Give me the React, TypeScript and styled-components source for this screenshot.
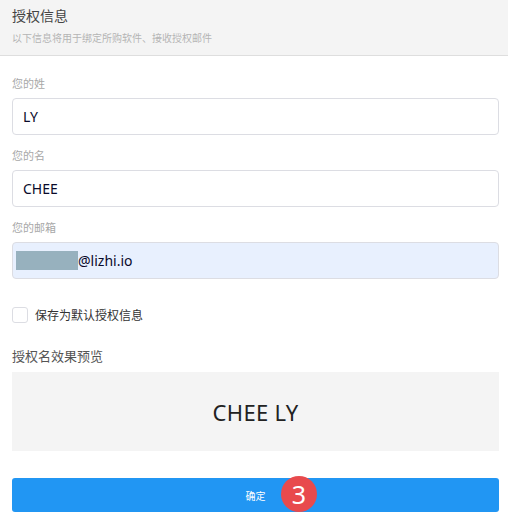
import React from "react";
import styled, { createGlobalStyle } from "styled-components";

const Global = createGlobalStyle`
  html, body { margin: 0; padding: 0; background: #fff; }
  body { font-family: "Segoe UI", "Noto Sans", "Noto Sans CJK SC", sans-serif; }
  * { box-sizing: border-box; }
`;

const Page = styled.div`
  width: 508px;
  height: 523px;
  background: #fff;
  display: flex;
  flex-direction: column;
`;

const Header = styled.div`
  height: 56px;
  background: #f4f4f4;
  border-bottom: 1px solid #dedede;
  padding: 5px 12px 0;
  display: flex;
  flex-direction: column;
`;

const Title = styled.div`
  font-size: 14px;
  line-height: 22px;
  color: #444;
`;

const Subtitle = styled.div`
  font-size: 10px;
  line-height: 14px;
  margin-top: 4px;
  color: #b5b5b5;
`;

const Body = styled.div`
  padding: 20px 9px 0 12px;
  display: flex;
  flex-direction: column;
`;

const Label = styled.div`
  font-size: 11px;
  line-height: 16px;
  color: #a8a8a8;
  margin-bottom: 6px;
`;

const Field = styled.div<{ $filled?: boolean }>`
  height: 37px;
  border: 1px solid #dcdde3;
  border-radius: 4px;
  background: ${(p) => (p.$filled ? "#e8f0fe" : "#fff")};
  display: flex;
  align-items: center;
  padding-left: ${(p) => (p.$filled ? "3px" : "10px")};
  font-size: 14px;
  color: #0a0a2a;
  margin-bottom: 13px;
`;

const Mask = styled.span`
  display: inline-block;
  width: 62px;
  height: 19px;
  background: #97b1be;
`;

const CheckRow = styled.label`
  display: flex;
  align-items: center;
  gap: 7px;
  margin-top: 14px;
  font-size: 12px;
  color: #333;
`;

const Box = styled.span`
  width: 16px;
  height: 16px;
  border: 1px solid #dcdde3;
  border-radius: 3px;
  background: #fff;
`;

const PreviewTitle = styled.div`
  font-size: 13px;
  line-height: 18px;
  color: #555;
  margin-top: 23px;
  margin-bottom: 7px;
`;

const Preview = styled.div`
  height: 79px;
  flex-shrink: 0;
  background: #f4f4f4;
  display: flex;
  align-items: center;
  justify-content: center;
  font-size: 22px;
  color: #222;
  letter-spacing: 0.3px;
`;

const Button = styled.div`
  position: relative;
  margin-top: 27px;
  height: 34px;
  flex-shrink: 0;
  background: #2196f3;
  border-radius: 3px;
  display: flex;
  align-items: center;
  justify-content: center;
  color: #fff;
  font-size: 10px;
`;

const Badge = styled.span`
  position: absolute;
  left: 269px;
  top: -2px;
  width: 36px;
  height: 36px;
  border-radius: 50%;
  background: #e84a4d;
  color: #fff;
  font-size: 25px;
  display: flex;
  align-items: center;
  justify-content: center;
  line-height: 1;
`;

export default function App() {
  return (
    <Page>
      <Global />
      <Header>
        <Title>授权信息</Title>
        <Subtitle>以下信息将用于绑定所购软件、接收授权邮件</Subtitle>
      </Header>
      <Body>
        <Label>您的姓</Label>
        <Field>LY</Field>
        <Label>您的名</Label>
        <Field>CHEE</Field>
        <Label>您的邮箱</Label>
        <Field $filled>
          <Mask />
          @lizhi.io
        </Field>
        <CheckRow>
          <Box />
          保存为默认授权信息
        </CheckRow>
        <PreviewTitle>授权名效果预览</PreviewTitle>
        <Preview>CHEE LY</Preview>
        <Button>
          确定
          <Badge>3</Badge>
        </Button>
      </Body>
    </Page>
  );
}
